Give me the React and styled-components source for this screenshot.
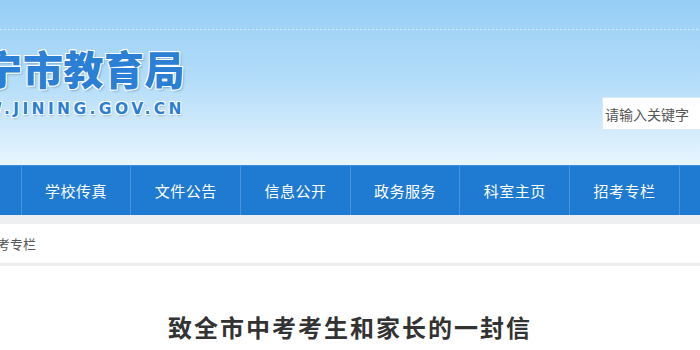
import React from 'react';
import styled, { createGlobalStyle } from 'styled-components';

const GlobalStyle = createGlobalStyle`
  html, body {
    margin: 0;
    padding: 0;
    background: #fff;
    font-family: "Noto Sans CJK SC", "Microsoft YaHei", sans-serif;
    overflow: hidden;
  }
`;

const navItems = ['网站首页', '学校传真', '文件公告', '信息公开', '政务服务', '科室主页', '招考专栏', '联系我们'];

export default function App() {
  return (
    <Page>
      <GlobalStyle />
      <Header>
        <Dots />
        <HeaderBody>
          <Logo>
            <LogoTitle>济宁市教育局</LogoTitle>
            <LogoUrl>WWW.JINING.GOV.CN</LogoUrl>
          </Logo>
          <Search placeholder="请输入关键字" />
        </HeaderBody>
      </Header>
      <Nav>
        {navItems.map((item) => (
          <NavItem key={item}>{item}</NavItem>
        ))}
      </Nav>
      <Gap />
      <Crumb>
        <CrumbText>招考专栏</CrumbText>
      </Crumb>
      <Article>
        <ArticleTitle>致全市中考考生和家长的一封信</ArticleTitle>
      </Article>
    </Page>
  );
}

const Page = styled.div`
  width: 700px;
  height: 350px;
  overflow: hidden;
`;

const Header = styled.div`
  height: 165px;
  background: linear-gradient(to bottom, #97cef6 0%, #b4ddf9 50%, #e8f5fe 100%);
  display: flex;
  flex-direction: column;
`;

const Dots = styled.div`
  height: 1px;
  margin-top: 29px;
  background-image: linear-gradient(to right, rgba(255, 255, 255, 0.55) 50%, transparent 50%);
  background-size: 4px 1px;
`;

const HeaderBody = styled.div`
  display: flex;
  justify-content: space-between;
  align-items: flex-start;
`;

const Logo = styled.div`
  flex: 0 0 243px;
  display: flex;
  flex-direction: column;
  align-items: flex-end;
  margin-left: -58px;
  padding-top: 16px;
  white-space: nowrap;
`;

const LogoTitle = styled.div`
  font-family: "Noto Sans CJK SC", sans-serif;
  font-weight: 900;
  font-size: 40px;
  line-height: 44px;
  letter-spacing: 0.5px;
  color: #2b7fd4;
  text-shadow:
    -1px -1px 0 #fff, 1px -1px 0 #fff, -1px 1px 0 #fff, 1px 1px 0 #fff,
    2px 2px 2px rgba(40, 90, 150, 0.35);
`;

const LogoUrl = styled.div`
  font-family: "DejaVu Sans", sans-serif;
  font-weight: bold;
  font-size: 15.5px;
  line-height: 18px;
  letter-spacing: 3.4px;
  margin-top: 10px;
  color: #2b7fd4;
  text-shadow:
    -1px -1px 0 #fff, 1px -1px 0 #fff, -1px 1px 0 #fff, 1px 1px 0 #fff,
    1px 2px 2px rgba(40, 90, 150, 0.3);
`;

const Search = styled.input`
  margin-top: 67px;
  width: 110px;
  margin-right: -12px;
  height: 33px;
  box-sizing: border-box;
  border: 1px solid #dbe9f3;
  background: #fff;
  padding: 0 2px;
  font-family: "Noto Sans CJK SC", sans-serif;
  font-size: 14px;
  outline: none;

  &::placeholder {
    color: #555;
  }
`;

const Nav = styled.div`
  height: 50px;
  background: #1f7bd1;
  border-top: 1px solid #3f90dc;
  box-sizing: border-box;
  display: flex;
  margin-left: -88px;
`;

const NavItem = styled.div`
  flex: 0 0 109.7px;
  display: flex;
  align-items: center;
  justify-content: center;
  border-right: 1px solid #4b94dc;
  box-sizing: border-box;
  color: #fff;
  font-size: 15px;
  letter-spacing: 0.5px;
`;

const Gap = styled.div`
  height: 9px;
  background: #edeff1;
`;

const Crumb = styled.div`
  height: 39px;
  background: #fff;
  border-bottom: 3px solid #eeeeee;
  display: flex;
  align-items: center;
`;

const CrumbText = styled.span`
  margin-left: -16px;
  font-size: 13px;
  color: #555;
`;

const Article = styled.div`
  display: flex;
  justify-content: center;
  padding-top: 46px;
`;

const ArticleTitle = styled.h1`
  margin: 0;
  font-size: 24px;
  line-height: 30px;
  font-weight: bold;
  color: #333;
  letter-spacing: 2px;
`;
